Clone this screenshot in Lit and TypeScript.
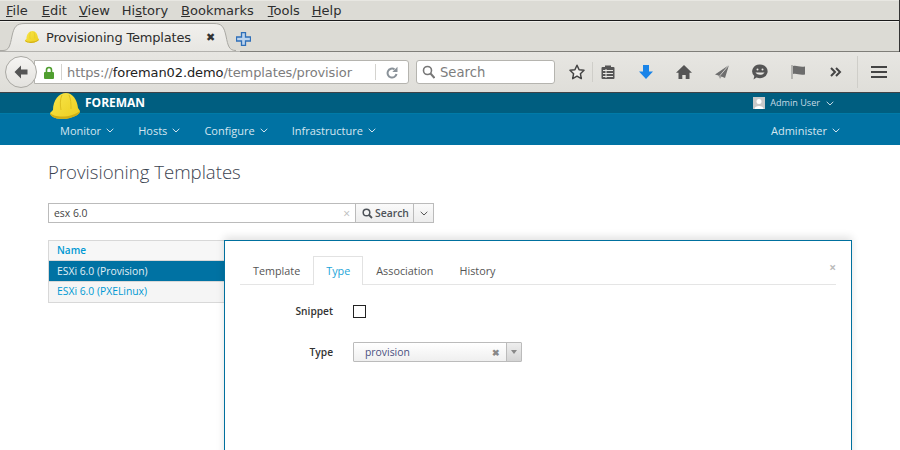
import { LitElement, html, css } from "lit";
import { customElement } from "lit/decorators.js";

const hat = (w: number, h: number, id: string) => html`<svg width=${w} height=${h} viewBox="0 0 30 26">
  <defs><linearGradient id=${id} x1="0" y1="0" x2="1" y2="1"><stop offset="0" stop-color="#f8e64a"/><stop offset="1" stop-color="#eccd1e"/></linearGradient></defs>
  <path d="M3 17C3 7 9 0 16 0c7 0 11 7 12 15l2 3c0 3-4 5-10 7-6 1.500-14 1-17-1-2-1-3-3-3-4z" fill="url(#${id})"/>
  <path d="M0 19.500c2 3 7 4 12 4 7 0 14-2 18-5.500 0 3-4 5-10 7-6 1.500-14 1-17-1-2-1-3-3-3-4.500z" fill="#d1ae14"/>
  <path d="M12 2c-2 4-2 10-1 15M19 2c2 4 2 9 2 14" stroke="#dcbf20" stroke-width="1" fill="none"/>
</svg>`;

const chev = () => html`<svg class="chev" width="8" height="5" viewBox="0 0 8 5"><path d="M.7.8 4 4 7.300.8" fill="none" stroke="currentColor" stroke-width="1"/></svg>`;

@customElement("app-root")
export class AppRoot extends LitElement {
  static styles = css`
    :host { display: block; width: 900px; height: 450px; overflow: hidden; position: relative; background: #fff; font-family: "Open Sans", sans-serif; }
    .edge { position: absolute; right: 0; top: 0; width: 1px; height: 52px; background: #333; z-index: 3; }
    .menubar { height: 20px; background: #dcdbd5; display: flex; gap: 12px; padding-left: 6px; font: 13px/22px "DejaVu Sans", sans-serif; color: #2e2e2e; border-bottom: 1px solid #1a1a1a; box-shadow: inset 0 1px 0 #e8e7e2; }
    .menubar span:nth-child(1) { margin-right: 2px; }
    .menubar span:nth-child(4) { margin-right: 1px; }
    .menubar span:nth-child(5) { margin-right: 2px; }
    .tabstrip { position: relative; height: 29px; background: #dcdbd5; border-top: 1px solid #f0efeb; border-bottom: 1px solid #7f7e79; display: flex; align-items: flex-end; }
    .tabshape { position: absolute; left: 0; top: 0; }
    .tab { position: relative; margin-left: 25px; width: 190px; height: 28px; box-sizing: border-box; display: flex; align-items: center; font: 13px "DejaVu Sans", sans-serif; letter-spacing: -0.18px; color: #2e2e2e; }
    .tab svg { margin-right: 7px; flex: none; }
    .tab .title { flex: 1; }
    .tab .x { font-size: 11px; font-weight: bold; color: #333; }
    .plus { position: relative; margin-left: 21px; margin-bottom: 5px; }
    .toolbar { height: 40px; box-sizing: border-box; background: linear-gradient(#e7e6e2, #dfded9); display: flex; align-items: center; padding-left: 5px; }
    .back { width: 32px; height: 32px; border-radius: 50%; border: 1px solid #aaa9a4; background: linear-gradient(#f6f5f3, #e3e2de); display: flex; align-items: center; justify-content: center; box-sizing: border-box; z-index: 1; flex: none; }
    .url { margin-left: -3px; width: 375px; height: 24px; box-sizing: border-box; background: #fff; border: 1px solid #b5b4af; border-radius: 0 3px 3px 0; display: flex; align-items: center; font: 13px "DejaVu Sans", sans-serif; color: #7d7d7d; padding-left: 8px; flex: none; }
    .url .lock { flex: none; margin-right: 6px; }
    .url .sep { width: 1px; height: 16px; background: #d4d3cf; flex: none; }
    .url .addr { flex: none; margin: 0 24px 0 5px; white-space: nowrap; width: 284px; letter-spacing: -0.1px; }
    .url b { font-weight: normal; color: #222; }
    .url .reload { width: 32px; display: flex; justify-content: center; }
    .searchbox { margin-left: 7px; width: 139px; height: 24px; box-sizing: border-box; background: #fff; border: 1px solid #b5b4af; border-radius: 3px; display: flex; align-items: center; gap: 5px; padding-left: 5px; font: 13.2px "DejaVu Sans", sans-serif; color: #7d7d7d; flex: none; }
    .icons { display: flex; align-items: center; margin-left: 14px; gap: 22px; }
    .ico { width: 16px; height: 16px; display: block; flex: none; }
    .group { display: flex; align-items: center; gap: 7px; }
    .toolsep { width: 1px; height: 20px; background: #cfcec9; flex: none; }
    .toolsep.tall { height: 32px; margin: 0 -9px; }
    .nav1 { height: 20px; background: #005e80; border-top: 1px solid #3f4347; display: flex; align-items: flex-start; color: #fff; position: relative; }
    .logo { position: absolute; left: 50px; top: 0; z-index: 2; display: flex; }
    .brand { position: absolute; left: 85px; top: 1px; font: 700 12px/18px "Open Sans", sans-serif; }
    .user { margin-left: auto; margin-right: 66px; display: flex; align-items: center; gap: 4px; font-size: 9.1px; line-height: 20px; height: 20px; color: #c8dbe5; }
    .avatar { width: 12px; height: 12px; display: block; margin-right: 1px; }
    .user .chev { margin-left: 2px; }
    .nav2 { height: 32px; background: #0072a3; border-top: 1px solid #007ba8; box-sizing: border-box; display: flex; align-items: center; padding: 1px 60px 0; gap: 24.1px; font-size: 11px; color: #d5e6f0; }
    .nav2 span { display: flex; align-items: center; gap: 5px; }
    .nav2 .last { margin-left: auto; }
    .main { padding: 0 48px; }
    h1 { margin: 0; padding-top: 15px; font: 300 18.6px/24px "Open Sans", sans-serif; color: #3b4350; height: 42px; box-sizing: border-box; }
    .searchrow { display: flex; margin-top: 16px; height: 20px; font-size: 10.4px; color: #444; }
    .searchrow .input { width: 308px; box-sizing: border-box; border: 1px solid #bbb; display: flex; align-items: center; padding: 0 5px; justify-content: space-between; height: 20px; background: #fff; }
    .searchrow .cl { color: #bbb; font-size: 12px; }
    .searchrow .btn { height: 20px; box-sizing: border-box; border: 1px solid #bbb; border-left: none; background: linear-gradient(#fafafa, #ededed); display: flex; align-items: center; font-weight: 600; color: #4d5258; }
    .btn.s { width: 58px; padding-left: 6px; gap: 2px; }
    .btn.d { width: 20px; justify-content: center; }
    .list { margin-top: 17px; width: 300px; border: 1px solid #d8d8d8; box-sizing: border-box; font-size: 10.35px; }
    .r { height: 21px; display: flex; align-items: center; padding-left: 8px; box-sizing: border-box; color: #0099d3; }
    .r.h { font-weight: 600; background: #f7f7f7; height: 20px; border-bottom: 1px solid #d8d8d8; font-size: 10px; padding-bottom: 1px; }
    .r.sel { background: #0072a3; color: #e2eff5; height: 20px; }
    .r.alt { background: #f5f5f5; height: 21px; border-top: 1px solid #d8d8d8; padding-bottom: 2px; }
    .modal { position: absolute; left: 224px; top: 240px; width: 628px; height: 230px; box-sizing: border-box; background: #fff; border: 1px solid #00709e; box-shadow: 0 -3px 8px rgba(0,0,0,.12); padding: 15px; }
    .close { position: absolute; right: 15px; top: 21px; color: #bbb; font-size: 12px; line-height: 12px; font-weight: 700; }
    .tabs { display: flex; height: 28px; border-bottom: 1px solid #e5e5e5; font-size: 10.8px; color: #555; }
    .tabs span { padding: 0 12px 1px; display: flex; align-items: center; box-sizing: border-box; height: 29px; border: 1px solid transparent; border-bottom: none; }
    .tabs .on { color: #1ca5d9; border-color: #e2e2e2; background: #fff; }
    .row { display: grid; grid-template-columns: 93px 1fr; column-gap: 20px; align-items: center; font-size: 10.2px; font-weight: 600; color: #333; }
    .row label { text-align: right; }
    .row.a { margin-top: 19px; height: 13px; }
    .row.b { margin-top: 25px; height: 20px; }
    .check { width: 13px; height: 13px; border: 1px solid #222; box-sizing: border-box; background: #fff; }
    .select { width: 169px; height: 20px; box-sizing: border-box; border: 1px solid #bbb; border-radius: 1px; display: flex; align-items: center; background: linear-gradient(#fff, #efefef); font-weight: 400; color: #4a5080; }
    .select .v { flex: 1; padding-left: 11px; font-size: 10.4px; }
    .select .c { color: #888; font-weight: 700; font-size: 9px; margin-right: 6px; }
    .select .a { width: 14px; height: 18px; border-left: 1px solid #bbb; background: linear-gradient(#eee, #d4d4d4); display: flex; align-items: center; justify-content: center; }
  `;

  render() {
    return html`
      <span class="edge"></span>
      <div class="menubar">
        <span><u>F</u>ile</span><span><u>E</u>dit</span><span><u>V</u>iew</span><span>Hi<u>s</u>tory</span><span><u>B</u>ookmarks</span><span><u>T</u>ools</span><span><u>H</u>elp</span>
      </div>
      <div class="tabstrip">
        <svg class="tabshape" width="240" height="30" viewBox="0 0 240 30">
          <defs><linearGradient id="tabbg" x1="0" y1="0" x2="0" y2="1"><stop offset="0" stop-color="#f1f0ed"/><stop offset="1" stop-color="#e7e6e2"/></linearGradient></defs>
          <path d="M0 29.500V28.500H3C9 28.500 10 24 12 14C14 5 16 1.500 25 1.500H214C222 1.500 224 5 226 14C228 24 229 28.500 236 28.500H240V29.500Z" fill="url(#tabbg)"/>
          <path d="M0 28.500H3C9 28.500 10 24 12 14C14 5 16 1.500 25 1.500H214C222 1.500 224 5 226 14C228 24 229 28.500 236 28.500" fill="none" stroke="#a9a8a3"/>
        </svg>
        <div class="tab">${hat(14, 12, "h1")}<span class="title">Provisioning Templates</span><span class="x">✖</span></div>
        <svg class="plus" width="15" height="14" viewBox="0 0 15 14"><path d="M5.500.5h4v4.500h5v4h-5v4.500h-4V9H.5V5h5z" fill="#bcd4ee" stroke="#2f6fb8" stroke-width="1.300"/></svg>
      </div>
      <div class="toolbar">
        <div class="back"><svg width="14" height="14" viewBox="0 0 14 14"><path d="M7 .5L.5 7 7 13.500V9.500h6.500v-5H7z" fill="#555"/></svg></div>
        <div class="url">
          <svg class="lock" width="12" height="13" viewBox="0 0 12 13"><path d="M3.500 6V4a2.500 2.500 0 0 1 5 0v2" fill="none" stroke="#4f9e2f" stroke-width="1.600"/><rect x="1" y="6" width="10" height="7" rx="1" fill="#4f9e2f"/></svg>
          <span class="sep"></span>
          <span class="addr">https://<b>foreman02.demo</b>/templates/provisior</span>
          <span class="sep"></span>
          <span class="reload"><svg width="12" height="13" viewBox="0 0 12 13"><path d="M10.500 8A4.500 4.500 0 1 1 8.500 3.300" fill="none" stroke="#8a9299" stroke-width="2"/><path d="M11.500.8v5.200H6.300z" fill="#8a9299"/></svg></span>
        </div>
        <div class="searchbox"><svg width="13" height="14" viewBox="0 0 13 14"><circle cx="5.500" cy="5.500" r="4" fill="none" stroke="#777" stroke-width="1.600"/><path d="M8.500 8.500l4 4.500" stroke="#777" stroke-width="2"/></svg>Search</div>
        <div class="icons">
          <div class="group">
            <svg class="ico" viewBox="0 0 16 16"><path d="M8 1.200l2.100 4.500 4.900.6-3.600 3.400.9 4.900L8 12.200 3.700 14.600l.9-4.900L1 6.300l4.900-.6z" fill="#f0efec" stroke="#444" stroke-width="1.500" stroke-linejoin="round"/></svg>
            <span class="toolsep"></span>
            <svg class="ico" viewBox="0 0 16 16"><path d="M2.500 3H5V1.500h6V3h2.500A1 1 0 0 1 14.500 4v10a1 1 0 0 1-1 1h-11a1 1 0 0 1-1-1V4a1 1 0 0 1 1-1z" fill="#555"/><path d="M3 6.500h10M3 9.500h10M3 12.500h10M6 5v9" stroke="#e7e6e2"/></svg>
          </div>
          <svg class="ico" viewBox="0 0 16 16"><path d="M5 1h6v6.500h4L8 15 1 7.500h4z" fill="#1a84e8"/></svg>
          <svg class="ico" viewBox="0 0 16 16"><path d="M8 1L0 8.800h2.500V15H6.300v-4h3.400v4h3.800V8.800H16z" fill="#555"/></svg>
          <svg class="ico" viewBox="0 0 16 16"><path d="M15 1L1 10.500l3.500 1 1.500 3.500 1.500-2.500 3.500 1.500z" fill="#6e6e6e"/><path d="M15 1L6 11.500l0 3.500" stroke="#e7e6e2" stroke-width=".8" fill="none"/></svg>
          <svg class="ico" viewBox="0 0 16 16"><path d="M8 .5a7.700 6.800 0 1 1-3.500 12.900L1.500 15.500l.8-3.500A7.500 6.800 0 0 1 8 .5z" fill="#555"/><circle cx="5.500" cy="5.500" r="1" fill="#e7e6e2"/><circle cx="10.500" cy="5.500" r="1" fill="#e7e6e2"/><path d="M3.500 8.500c2 3 7 3 9 0z" fill="#e7e6e2"/></svg>
          <svg class="ico" viewBox="0 0 16 16"><path d="M2 1v14" stroke="#a5a5a2" stroke-width="1.500"/><path d="M3 2c4-1 6 1.500 12 .5v8c-6 1-8-1.500-12-.5z" fill="#6c6c6c"/></svg>
          <svg class="ico" viewBox="0 0 16 16"><path d="M3 4l4 4-4 4M8 4l4 4-4 4" fill="none" stroke="#444" stroke-width="2"/></svg>
          <span class="toolsep tall"></span>
          <svg class="ico" viewBox="0 0 16 16"><path d="M0 3h16M0 8h16M0 13h16" stroke="#444" stroke-width="2.200"/></svg>
        </div>
      </div>
      <div class="nav1">
        <div class="logo">${hat(30, 26, "h2")}</div>
        <div class="brand">FOREMAN</div>
        <div class="user">
          <svg class="avatar" viewBox="0 0 12 12"><rect width="12" height="12" fill="#c9c9c9"/><circle cx="6" cy="4.500" r="2.500" fill="#fff"/><path d="M1.500 12c0-4 9-4 9 0z" fill="#fff"/></svg>
          <span>Admin User</span>${chev()}
        </div>
      </div>
      <div class="nav2">
        <span>Monitor ${chev()}</span><span>Hosts ${chev()}</span><span>Configure ${chev()}</span><span>Infrastructure ${chev()}</span><span class="last">Administer ${chev()}</span>
      </div>
      <div class="main">
        <h1>Provisioning Templates</h1>
        <div class="searchrow">
          <div class="input"><span>esx 6.0</span><span class="cl">×</span></div>
          <div class="btn s"><svg width="11" height="11" viewBox="0 0 11 11"><circle cx="4.500" cy="4.500" r="3.300" fill="none" stroke="#4d5258" stroke-width="1.500"/><path d="M7 7l3 3" stroke="#4d5258" stroke-width="1.800"/></svg>Search</div>
          <div class="btn d"><svg width="8" height="5" viewBox="0 0 8 5"><path d="M.7.8 4 4 7.300.8" fill="none" stroke="#555"/></svg></div>
        </div>
        <div class="list">
          <div class="r h">Name</div>
          <div class="r sel">ESXi 6.0 (Provision)</div>
          <div class="r alt">ESXi 6.0 (PXELinux)</div>
        </div>
      </div>
      <div class="modal">
        <span class="close">×</span>
        <div class="tabs"><span>Template</span><span class="on">Type</span><span>Association</span><span>History</span></div>
        <div class="row a"><label>Snippet</label><span class="check"></span></div>
        <div class="row b"><label>Type</label>
          <div class="select"><span class="v">provision</span><span class="c">✖</span><span class="a"><svg width="6" height="4" viewBox="0 0 6 4"><path d="M0 0h6L3 4z" fill="#888"/></svg></span></div>
        </div>
      </div>
    `;
  }
}
